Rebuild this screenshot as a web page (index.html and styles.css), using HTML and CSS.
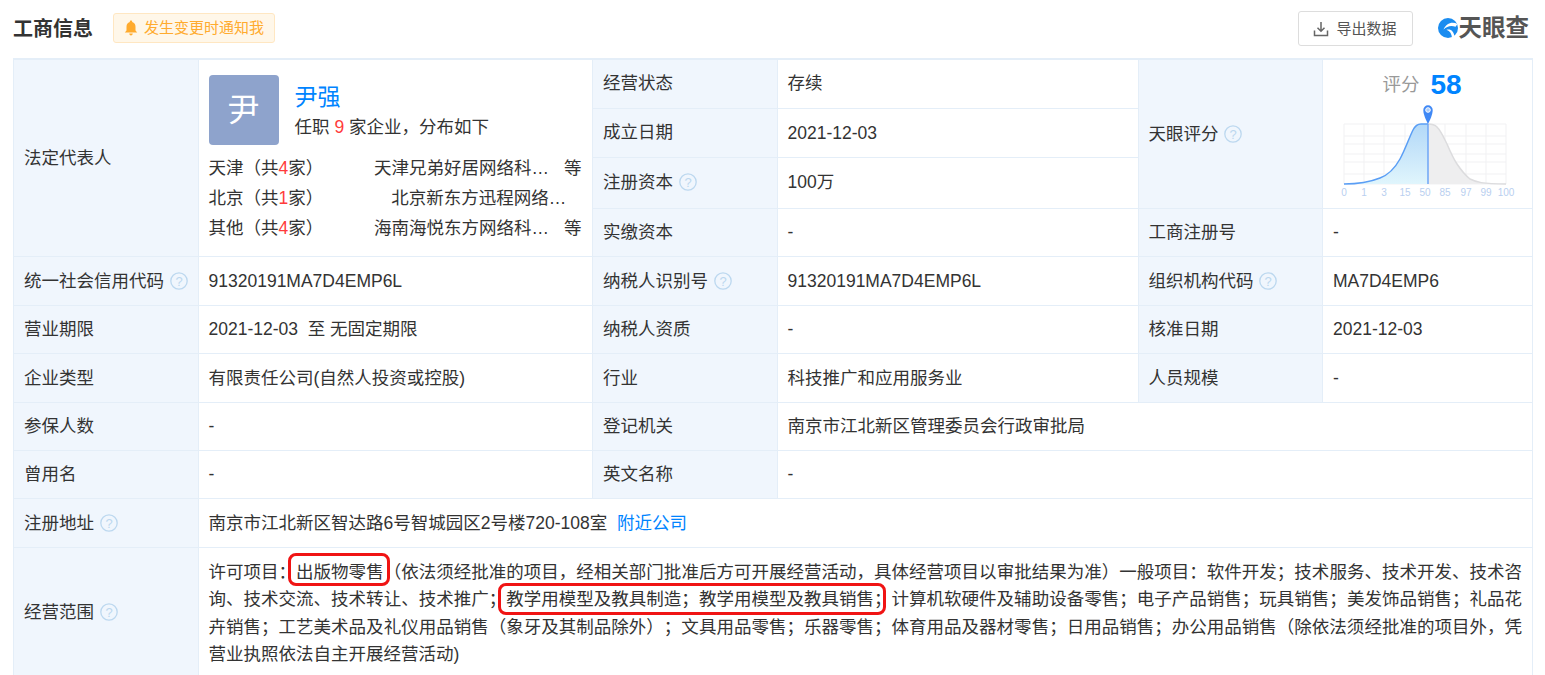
FILE: index.html
```html
<!DOCTYPE html>
<html lang="zh-CN">
<head>
<meta charset="utf-8">
<title>工商信息</title>
<link rel="stylesheet" href="styles.css">
</head>
<body>
<div class="page">
  <header class="head">
    <h2 class="title">工商信息</h2>
    <div class="notify">
      <svg class="bell" viewBox="0 0 14 16"><path d="M7 0.500c.7 0 1.200.5 1.200 1.200v.4C10.400 2.700 11.500 4.600 11.500 6.800v3.700l1.700 2H.8l1.700-2V6.800c0-2.200 1.100-4.100 3.300-4.700v-.4C5.800 1 6.300.5 7 .5z M5.200 13.500h3.600C8.600 14.700 7.900 15.500 7 15.500s-1.600-.8-1.800-2z"/></svg>
      发生变更时通知我
    </div>
    <div class="tools">
      <button class="export" type="button">
        <svg class="export-icon" viewBox="0 0 16 16"><path d="M8 1v9M4.500 6.800L8 10.300l3.500-3.500M1.500 9.500v5h13v-5"/></svg>
        导出数据
      </button>
      <div class="logo">
        <svg class="logo-icon" viewBox="0 0 20 20"><circle cx="10" cy="10" r="10" fill="#1a8cf0"/><path d="M19.500 6C14 3 8 5.500 5.500 11.500 9 8 13.500 7 17.500 8.800Z" fill="#fff"/><path d="M8.500 11.800C12.500 10.500 16 13 16.500 19L14 20C13.800 16 12 13 8.500 11.800Z" fill="#fff"/></svg>
        <span class="logo-text">天眼查</span>
      </div>
    </div>
  </header>
  <table class="info">
    <colgroup>
      <col class="c-label"><col class="c-a"><col class="c-label"><col class="c-b"><col class="c-label"><col class="c-c">
    </colgroup>
    <tbody>
      <tr class="r49">
        <th rowspan="4">法定代表人</th>
        <td rowspan="4" class="legal">
          <div class="person">
            <div class="avatar">尹</div>
            <div>
              <div class="name">尹强</div>
              <div class="sub">任职 <em>9</em> 家企业，分布如下</div>
            </div>
          </div>
          <div class="dist">
            <div class="city">天津（共<em>4</em>家）</div>
            <div class="cos"><span class="co">天津兄弟好居网络科技有限公司</span><span class="etc">等</span></div>
            <div class="city">北京（共<em>1</em>家）</div>
            <div class="cos cos-solo"><span class="co">北京新东方迅程网络科技有限公司</span></div>
            <div class="city">其他（共<em>4</em>家）</div>
            <div class="cos"><span class="co">海南海悦东方网络科技有限公司</span><span class="etc">等</span></div>
          </div>
        </td>
        <th class="nudge">经营状态</th>
        <td class="nudge">存续</td>
        <th rowspan="3">天眼评分 <svg class="q" viewBox="0 0 18 18"><circle cx="9" cy="9" r="8.200"/><text x="9" y="13.500">?</text></svg></th>
        <td rowspan="3" class="score">
          <div class="score-line"><span class="score-label">评分</span><span class="score-num">58</span></div>
          <svg class="chart" viewBox="0 0 200 94">
            <defs>
              <linearGradient id="fillBlue" x1="0" y1="0" x2="0" y2="1"><stop offset="0" stop-color="#b2d8f8"/><stop offset="1" stop-color="#e0f5fc"/></linearGradient>
            </defs>
            <g class="grid">
              <path d="M14 20H176M14 32H176M14 40H176M14 50H176M14 58H176M14 70H176M14 80H176"/>
              <path d="M14 20V80M34 20V80M54 20V80M75 20V80M95 20V80M115 20V80M136 20V80M156 20V80M176 20V80"/>
            </g>
            <path class="grey" d="M98 80V20C102 20 105 21 107 23C111 27 114 34 117 40C120 47 123 54 127 60C131 66 135 71 140 75C146 78 152 80 176 80Z"/>
            <path class="blue" d="M14 80C28 80 40 78 50 74C58 71 65 64 70 55C75 46 79 34 83 26C85 22 88 20 91 20H98V80Z" fill="url(#fillBlue)"/>
            <path class="grey-line" d="M98 20C102 20 105 21 107 23C111 27 114 34 117 40C120 47 123 54 127 60C131 66 135 71 140 75C146 78 152 80 176 80"/>
            <path class="blue-line" d="M14 80C28 80 40 78 50 74C58 71 65 64 70 55C75 46 79 34 83 26C85 22 88 20 91 20H98"/>
            <path class="marker" d="M98 20V80"/>
            <path class="pin" d="M98 20C96 16 93.300 10.500 93.300 6A4.700 4.700 0 0 1 102.700 6C102.700 10.500 100 16 98 20Z"/>
            <circle class="pin-dot" cx="98" cy="6" r="2.300"/>
            <g class="ticks">
              <text x="14" y="92">0</text><text x="34" y="92">1</text><text x="54" y="92">3</text><text x="75" y="92">15</text><text x="95" y="92">50</text><text x="115" y="92">85</text><text x="136" y="92">97</text><text x="156" y="92">99</text><text x="176" y="92">100</text>
            </g>
          </svg>
        </td>
      </tr>
      <tr class="r49"><th class="nudge">成立日期</th><td>2021-12-03</td></tr>
      <tr class="r51"><th class="nudge">注册资本 <svg class="q" viewBox="0 0 18 18"><circle cx="9" cy="9" r="8.200"/><text x="9" y="13.500">?</text></svg></th><td class="nudge">100万</td></tr>
      <tr class="r48"><th>实缴资本</th><td>-</td><th>工商注册号</th><td>-</td></tr>
      <tr class="r49">
        <th>统一社会信用代码 <svg class="q" viewBox="0 0 18 18"><circle cx="9" cy="9" r="8.200"/><text x="9" y="13.500">?</text></svg></th><td>91320191MA7D4EMP6L</td>
        <th>纳税人识别号 <svg class="q" viewBox="0 0 18 18"><circle cx="9" cy="9" r="8.200"/><text x="9" y="13.500">?</text></svg></th><td>91320191MA7D4EMP6L</td>
        <th>组织机构代码 <svg class="q" viewBox="0 0 18 18"><circle cx="9" cy="9" r="8.200"/><text x="9" y="13.500">?</text></svg></th><td>MA7D4EMP6</td>
      </tr>
      <tr class="r48"><th>营业期限</th><td>2021-12-03&nbsp; 至 无固定期限</td><th>纳税人资质</th><td>-</td><th>核准日期</th><td>2021-12-03</td></tr>
      <tr class="r49"><th>企业类型</th><td>有限责任公司(自然人投资或控股)</td><th>行业</th><td>科技推广和应用服务业</td><th>人员规模</th><td>-</td></tr>
      <tr class="r48"><th>参保人数</th><td>-</td><th>登记机关</th><td colspan="3">南京市江北新区管理委员会行政审批局</td></tr>
      <tr class="r48"><th>曾用名</th><td>-</td><th>英文名称</th><td colspan="3">-</td></tr>
      <tr class="r49"><th>注册地址 <svg class="q" viewBox="0 0 18 18"><circle cx="9" cy="9" r="8.200"/><text x="9" y="13.500">?</text></svg></th><td colspan="5">南京市江北新区智达路6号智城园区2号楼720-108室 <a class="near" href="#">附近公司</a></td></tr>
      <tr>
        <th>经营范围 <svg class="q" viewBox="0 0 18 18"><circle cx="9" cy="9" r="8.200"/><text x="9" y="13.500">?</text></svg></th>
        <td colspan="5" class="scope">许可项目：<mark class="hl hl-first">出版物零售</mark>（依法须经批准的项目，经相关部门批准后方可开展经营活动，具体经营项目以审批结果为准）一般项目：软件开发；技术服务、技术开发、技术咨询、技术交流、技术转让、技术推广；<mark class="hl hl-wide">教学用模型及教具制造；教学用模型及教具销售<span class="semi">；</span></mark>计算机软硬件及辅助设备零售；电子产品销售；玩具销售；美发饰品销售；礼品花卉销售；工艺美术品及礼仪用品销售（象牙及其制品除外）；文具用品零售；乐器零售；体育用品及器材零售；日用品销售；办公用品销售（除依法须经批准的项目外，凭营业执照依法自主开展经营活动)</td>
      </tr>
    </tbody>
  </table>
</div>
</body>
</html>
```
FILE: styles.css
```css
* { box-sizing: border-box; }
html, body { margin: 0; height: 100%; overflow: hidden; background: #fff; }
body {
  font-family: "Liberation Sans", "Noto Sans CJK SC", sans-serif;
  font-size: 17.5px;
  line-height: 20px;
  color: #333;
  text-spacing-trim: space-all;
}
.page { padding: 0 13px; }
.head { display: flex; align-items: center; height: 58px; padding-bottom: 3px; }
.title { margin: 0; padding-top: 2px; font-size: 20px; line-height: 24px; font-weight: 700; color: #333; }
.notify {
  display: flex; align-items: center; gap: 6px;
  width: 162px; height: 30px; margin-left: 20px; padding: 0 10px;
  background: #fff7e9; border: 1px solid #ffe7c2; border-radius: 3px;
  color: #ffab2e; font-size: 15px; line-height: 18px;
}
.bell { width: 14px; height: 16px; fill: #ffab2e; flex: none; }
.tools { display: flex; align-items: center; margin-left: auto; }
.export {
  display: flex; align-items: center; justify-content: center; gap: 7px;
  width: 115px; height: 35px; padding: 0; margin-top: 2px;
  background: #fff; border: 1px solid #ddd; border-radius: 3px;
  font: inherit; font-size: 15px; line-height: 18px; color: #555;
}
.export-icon { width: 16px; height: 16px; fill: none; stroke: #666; stroke-width: 1.500; }
.logo { display: flex; align-items: center; margin-left: 25px; margin-right: 3px; }
.logo-icon { width: 20px; height: 20px; }
.logo-text { font-size: 23.500px; font-weight: 700; color: #555; line-height: 26px; margin-left: 1px; }

.info { width: 1519px; table-layout: fixed; border-collapse: collapse; border-top: 2px solid #e4eef8; }
.c-label { width: 184.500px; }
.c-a { width: 394.500px; }
.c-b { width: 361px; }
.c-c { width: 210px; }
th, td { border: 1px solid #e4eef8; padding: 0 10px; text-align: left; vertical-align: middle; font-weight: 400; }
th { background: #f0f6fd; white-space: nowrap; }
.nudge { padding-bottom: 2px; }
.r48 { height: 48px; }
.r49 { height: 49px; }
.r51 { height: 51px; }
em { font-style: normal; color: #ff3b3b; }

.q { width: 18px; height: 18px; margin-left: 1px; vertical-align: -3px; }
.q circle { fill: none; stroke: #bcd8ef; stroke-width: 1.300; }
.q text { font-size: 13px; fill: #bcd8ef; text-anchor: middle; }

.legal { padding: 15px 10px 0; vertical-align: top; }
.person { display: flex; gap: 16px; }
.avatar {
  width: 70px; height: 70px; flex: none; display: flex; align-items: center; justify-content: center;
  background: #8ea3cc; border-radius: 4px; color: #fff; font-size: 32px; line-height: 40px;
}
.name { margin-top: 7px; font-size: 23px; line-height: 30px; color: #0084ff; }
.sub { margin-top: 2px; line-height: 26px; }
.dist { display: grid; grid-template-columns: 165px 1fr; margin-top: 8px; line-height: 30px; }
.cos { display: flex; justify-content: center; gap: 13px; }
.cos-solo { padding-left: 4px; }
.co { display: block; max-width: 177px; overflow: hidden; white-space: nowrap; text-overflow: ellipsis; }
.etc { flex: none; }

.score { padding: 0; text-align: center; vertical-align: top; }
.score-line { display: flex; justify-content: center; align-items: center; gap: 11px; height: 44px; padding: 6px 11px 0 0; }
.score-label { font-size: 18.500px; line-height: 24px; color: #999; }
.score-num { font-size: 28px; line-height: 30px; font-weight: 700; color: #0084ff; }
.chart { display: block; width: 200px; height: 94px; margin-left: 7px; }
.grid path { fill: none; stroke: #f1f1f3; stroke-width: 1; }
.grey { fill: #eeeeef; }
.grey-line { fill: none; stroke: #dcdcde; stroke-width: 1.500; }
.blue-line { fill: none; stroke: #5a9ef5; stroke-width: 1.500; }
.marker { stroke: #6ea6f7; stroke-width: 1.500; }
.pin { fill: #3f88f5; }
.pin-dot { fill: #a9ccfa; stroke: #fff; stroke-width: 1; }
.ticks text { font-size: 10px; fill: #b9cff0; text-anchor: middle; }

.near { color: #0084ff; text-decoration: none; margin-left: 5px; }
.scope { padding: 11px 10px 7px; line-height: 27.500px; text-align: justify; }
.hl {
  background: none; color: inherit;
  padding: 3px 3px 3px 5px; margin: 0 -3px 0 -5px;
  border-radius: 5px; outline: 3px solid #f01414;
}
.hl-first { padding-top: 6px; padding-bottom: 1px; }
.hl-wide { padding-right: 0; margin-right: 9px; }
.semi { letter-spacing: -9px; }
```
